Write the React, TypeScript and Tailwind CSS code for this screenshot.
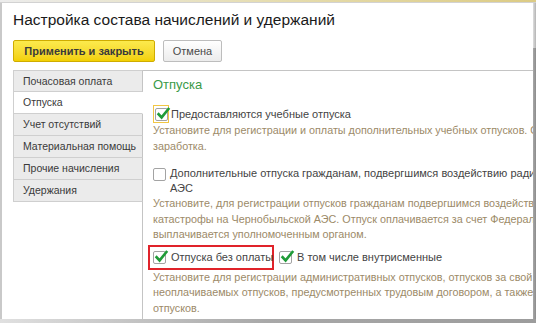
import React from "react";

const Check = () => (
  <svg width="15" height="15" viewBox="0 0 15 15" className="absolute left-[0px] top-[-3px]">
    <path d="M2.6 8.2 L5.6 11.4 L12.4 3" fill="none" stroke="#1f9b38" strokeWidth="2.6" strokeLinecap="square" />
  </svg>
);

function Box({ checked }: { checked?: boolean }) {
  return (
    <span className="relative inline-block w-[13px] h-[13px] border border-[#a3a3a3] rounded-[2px] bg-white shrink-0">
      {checked && <Check />}
    </span>
  );
}

const navItems = [
  "Почасовая оплата",
  "Отпуска",
  "Учет отсутствий",
  "Материальная помощь",
  "Прочие начисления",
  "Удержания",
];

export default function App() {
  return (
    <div className="w-[536px] h-[323px] bg-white flex flex-col overflow-hidden font-['Liberation_Sans',Arial,sans-serif]">
      <div className="h-[2px] bg-gradient-to-r from-[#ececec] via-[#e6ddb0] to-[#dccb84] shrink-0" />
      <div className="h-[1px] bg-[#d2d2d2] shrink-0" />
      <div className="flex-1 flex min-h-0">
        <div className="w-[2px] bg-[#c9c9c9] shrink-0" />
        <div className="flex-1 min-w-0 flex flex-col pl-[11px] overflow-hidden">
          <div className="pt-[7px] text-[15.5px] leading-[20px] text-[#1a1a1a] whitespace-nowrap">
            Настройка состава начислений и удержаний
          </div>
          <div className="mt-[10px] flex gap-[8px] h-[22px]">
            <div className="w-[142px] h-[22px] rounded-[2px] border border-[#cfac00] bg-gradient-to-b from-[#fcea4c] to-[#f2d000] flex items-center justify-center text-[11px] font-bold text-[#3a3a3a]">
              Применить и закрыть
            </div>
            <div className="w-[59px] h-[22px] rounded-[2px] border border-[#bdbdbd] bg-gradient-to-b from-[#ffffff] to-[#ececec] flex items-center justify-center text-[11px] text-[#4a4a4a]">
              Отмена
            </div>
          </div>
          <div className="mt-[8px] flex flex-1 min-h-0">
            <div className="w-[130px] shrink-0 flex flex-col">
              {navItems.map((n, i) => {
                const sel = i === 1;
                return (
                  <div
                    key={n}
                    className={
                      "h-[22px] border-l border-b border-[#cfcfcf] pl-[9px] text-[10.5px] leading-[21px] text-[#3a3a3a] whitespace-nowrap " +
                      (i === 0 ? "border-t " : "") +
                      (sel ? "bg-white border-r border-r-white" : "bg-[#ebebeb] border-r border-r-[#c4c4c4]")
                    }
                  >
                    {n}
                  </div>
                );
              })}
              <div className="flex-1 border-r border-[#c4c4c4]" />
            </div>
            <div className="flex-1 min-w-0 border-t border-[#c4c4c4] pl-[10px] pt-[6px] overflow-hidden">
              <div className="text-[13px] leading-[16px] text-[#3a9a48]">Отпуска</div>
              <div className="mt-[12px] flex items-center h-[18px]">
                <span className="w-[16px] h-[18px] border border-[#f2c744] flex items-center justify-center shrink-0">
                  <Box checked />
                </span>
                <span className="ml-[2px] text-[11px] text-[#444] whitespace-nowrap">
                  Предоставляются учебные отпуска
                </span>
              </div>
              <div className="text-[10.8px] leading-[15.5px] text-[#9c8a68] whitespace-nowrap">
                <div>Установите для регистрации и оплаты дополнительных учебных отпусков. Оплата производится с сохранением среднего</div>
                <div>заработка.</div>
              </div>
              <div className="mt-[12px] flex items-start">
                <span className="mt-[1.5px] flex">
                  <Box />
                </span>
                <div className="ml-[4px] text-[11px] leading-[15px] text-[#444] whitespace-nowrap">
                  <div>Дополнительные отпуска гражданам, подвергшимся воздействию радиации вследствие катастрофы на Чернобыльской</div>
                  <div>АЭС</div>
                </div>
              </div>
              <div className="text-[10.8px] leading-[15.5px] text-[#9c8a68] whitespace-nowrap">
                <div>Установите, для регистрации отпусков гражданам подвергшимся воздействию радиации вследствие катастрофы</div>
                <div>катастрофы на Чернобыльской АЭС. Отпуск оплачивается за счет Федерального бюджета и</div>
                <div>выплачивается уполномоченным органом.</div>
              </div>
              <div className="mt-[2px] flex items-center">
                <div className="-ml-[5px] w-[126px] h-[25px] border-2 border-[#e0232a] flex items-center pl-[3px] shrink-0">
                  <Box checked />
                  <span className="ml-[5px] text-[11px] text-[#444] whitespace-nowrap">Отпуска без оплаты</span>
                </div>
                <span className="ml-[5px] flex">
                  <Box checked />
                </span>
                <span className="ml-[5px] text-[11px] text-[#444] whitespace-nowrap">В том числе внутрисменные</span>
              </div>
              <div className="text-[10.8px] leading-[15.5px] text-[#9c8a68] whitespace-nowrap">
                <div>Установите для регистрации административных отпусков, отпусков за свой счет и других</div>
                <div>неоплачиваемых отпусков, предусмотренных трудовым договором, а также учебных</div>
                <div>отпусков.</div>
              </div>
            </div>
          </div>
        </div>
        <div className="w-[3px] shrink-0 flex flex-col">
          <div className="h-[45px] bg-gradient-to-r from-[#dedede] to-[#b4b4b4]" />
          <div className="flex-1 bg-gradient-to-r from-[#a8a8a8] to-[#8c8c8c]" />
        </div>
      </div>
      <div className="h-[4px] shrink-0 bg-gradient-to-r from-[#e0e0e0] via-[#a8a8a8] to-[#9c9c9c]" />
    </div>
  );
}
